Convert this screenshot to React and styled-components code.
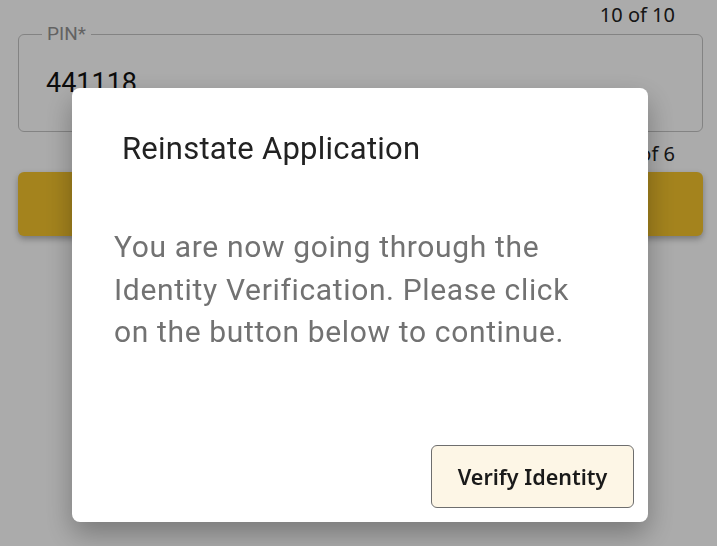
import React from "react";
import styled, { createGlobalStyle } from "styled-components";

const GlobalStyle = createGlobalStyle`
  html, body { margin: 0; padding: 0; background: #fff; }
  body { width: 717px; height: 546px; overflow: hidden; }
`;

// page behind the dialog
const Page = styled.div`
  box-sizing: border-box;
  width: 717px;
  height: 546px;
  padding: 3px 14px 0 18px;
  background: #fff;
  font-family: "Noto Sans", sans-serif;
`;

const Counter = styled.div`
  text-align: right;
  padding-right: 28px;
  font-size: 20px;
  line-height: 24px;
  color: #222;
  margin-top: ${(p) => p.top || 0}px;
  margin-bottom: ${(p) => p.gap || 0}px;
`;

const Field = styled.fieldset`
  box-sizing: border-box;
  margin: -3px 0 0;
  height: 108px;
  padding: 0 27px;
  border: 1.5px solid #c4c4c4;
  border-radius: 6px;
  legend {
    padding: 0 5px;
    margin-left: -4px;
    font-family: Roboto, sans-serif;
    font-size: 19px;
    line-height: 20px;
    color: #939393;
  }
`;

const PinValue = styled.div`
  margin-top: 23px;
  font-family: Roboto, sans-serif;
  font-size: 27px;
  color: #111;
`;

const GoldButton = styled.div`
  height: 64px;
  border-radius: 6px;
  background: #f5c42c;
  box-shadow: 0 3px 6px rgba(0, 0, 0, 0.3);
`;

const Backdrop = styled.div`
  position: fixed;
  inset: 0;
  background: rgba(0, 0, 0, 0.33);
  display: flex;
  align-items: flex-start;
  padding: 88px 0 0 72px;
`;

const Dialog = styled.div`
  box-sizing: border-box;
  width: 576px;
  height: 434px;
  background: #fff;
  border-radius: 8px;
  box-shadow: 0 12px 28px rgba(0, 0, 0, 0.3);
  display: flex;
  flex-direction: column;
  padding: 42px 14px 14px 42px;
  font-family: Roboto, sans-serif;
`;

const Title = styled.h2`
  margin: 0 0 0 8px;
  font-weight: 400;
  font-size: 31px;
  letter-spacing: 0.25px;
  line-height: 38px;
  color: #222;
`;

const Body = styled.p`
  margin: 58px 0 0;
  max-width: 480px;
  font-size: 30px;
  letter-spacing: 0.65px;
  line-height: 42.5px;
  color: #727272;
  flex: 1;
`;

const Actions = styled.div`
  display: flex;
  justify-content: flex-end;
`;

const VerifyButton = styled.button`
  width: 203px;
  height: 63px;
  box-sizing: border-box;
  border: 1.5px solid #6e6e6e;
  border-radius: 6px;
  background: #fdf6e6;
  font-family: "Noto Sans", sans-serif;
  font-weight: 600;
  font-size: 21.5px;
  color: #1a1a1a;
`;

export default function App() {
  return (
    <>
      <GlobalStyle />
      <Page>
        <Counter>10 of 10</Counter>
        <Field>
          <legend>PIN*</legend>
          <PinValue>441118</PinValue>
        </Field>
        <Counter top={10} gap={6}>5 of 6</Counter>
        <GoldButton />
      </Page>
      <Backdrop>
        <Dialog>
          <Title>Reinstate Application</Title>
          <Body>
            You are now going through the Identity Verification. Please click
            on the button below to continue.
          </Body>
          <Actions>
            <VerifyButton>Verify Identity</VerifyButton>
          </Actions>
        </Dialog>
      </Backdrop>
    </>
  );
}
